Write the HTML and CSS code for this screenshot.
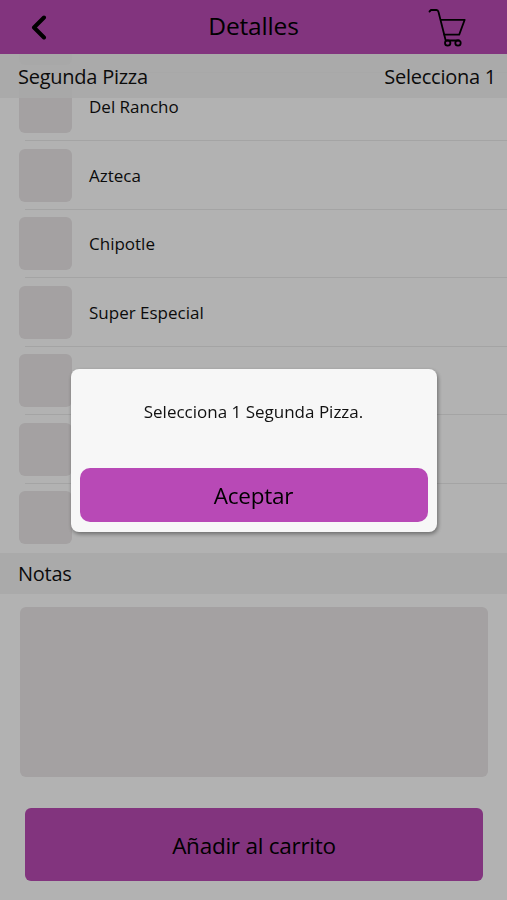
FILE: index.html
```html
<!DOCTYPE html>
<html lang="es">
<head>
  <meta charset="UTF-8" />
  <meta name="viewport" content="width=device-width, initial-scale=1" />
  <title>Detalles</title>
  <link rel="stylesheet" href="styles.css">
</head>
<body>
  <div class="screen">
    <header class="topbar">
      <button class="icon-btn back" aria-label="Volver">
        <svg width="18" height="26" viewBox="0 0 18 26">
          <path d="M14 3.5 L4 13.5 L14 23.5" />
        </svg>
      </button>
      <h1 class="title">Detalles</h1>
      <button class="icon-btn cart" aria-label="Carrito">
        <svg width="40" height="40" viewBox="0 0 40 40">
          <path d="M2.5 4.5 L4 3 H9.5 Q11 3 11.5 5 L18.7 33.5 H32" />
          <path d="M14 12.8 H37.7 L32.2 27.6 H17.3" />
          <circle cx="20.7" cy="36" r="2.7" />
          <circle cx="31" cy="36" r="2.7" />
        </svg>
      </button>
    </header>

    <main>
      <section class="picker">
        <div class="section-head">
          <span>Segunda Pizza</span>
          <span>Selecciona 1</span>
        </div>
        <ul class="options">
          <li class="option"><span class="check"></span></li>
          <li class="option"><span class="check"></span>Del Rancho</li>
          <li class="option"><span class="check"></span>Azteca</li>
          <li class="option"><span class="check"></span>Chipotle</li>
          <li class="option"><span class="check"></span>Super Especial</li>
          <li class="option"><span class="check"></span></li>
          <li class="option"><span class="check"></span></li>
          <li class="option"><span class="check"></span></li>
        </ul>
      </section>

      <section class="notes">
        <div class="section-head notes-head">Notas</div>
        <textarea class="notes-input" aria-label="Notas"></textarea>
      </section>

      <button class="add-btn">Añadir al carrito</button>
    </main>
  </div>

  <!-- Alert -->
  <div class="overlay">
    <div class="dialog" role="alertdialog">
      <p class="message">Selecciona 1 Segunda Pizza.</p>
      <button class="accept-btn">Aceptar</button>
    </div>
  </div>
</body>
</html>
```
FILE: styles.css
```css
* {
  box-sizing: border-box;
}

body {
  margin: 0;
  font-family: "Open Sans", "Noto Sans", sans-serif;
  background-color: #fff;
  color: #111;
}

button {
  font-family: inherit;
  color: #000;
  border: none;
  padding: 0;
}

.screen {
  height: 900px;
  overflow: hidden;
}

/* Top bar */
.topbar {
  display: grid;
  grid-template-columns: 80px 1fr 80px;
  align-items: center;
  height: 54px;
  background-color: #bb4bb5;
}

.title {
  margin: 0;
  padding-bottom: 2px;
  font-size: 24.5px;
  font-weight: 400;
  letter-spacing: -0.15px;
  line-height: 52px;
  text-align: center;
  color: #000;
}

.icon-btn {
  display: flex;
  background: none;
}

.icon-btn svg {
  fill: none;
  stroke: #000;
  stroke-linecap: round;
  stroke-linejoin: round;
}

.back {
  padding-left: 30px;
}

.back svg {
  stroke-width: 4;
}

.cart svg {
  stroke-width: 1.8;
}

/* Section headings */
.section-head {
  display: flex;
  justify-content: space-between;
  align-items: center;
  height: 43.5px;
  padding: 2px 11px 0 18px;
  font-size: 20px;
  letter-spacing: -0.25px;
  background-color: rgba(242, 242, 242, 0.85);
}

.notes-head {
  height: 41px;
  padding-top: 0;
}

/* Options list */
.picker {
  height: 499px;
  overflow: hidden;
}

.picker .section-head {
  position: relative;
  z-index: 1;
}

.options {
  list-style: none;
  margin: -93.5px 0 0;
  padding: 0;
}

.option {
  display: flex;
  align-items: center;
  gap: 17px;
  height: 68.5px;
  padding-left: 19px;
  font-size: 17px;
  background: linear-gradient(#ebebeb, #ebebeb) 25px 100% / 100% 1px no-repeat;
}

.option:last-child {
  background: none;
}

.check {
  width: 53px;
  height: 53px;
  border-radius: 6px;
  background-color: #ebe7e8;
}

/* Notes */
.notes-input {
  display: block;
  width: 468px;
  height: 170px;
  margin: 13px 0 0 20px;
  border: none;
  border-radius: 6px;
  background-color: #ebe7e8;
  resize: none;
}

.add-btn {
  display: block;
  width: 458px;
  height: 73px;
  margin: 31px 0 0 25px;
  padding-top: 2px;
  border-radius: 6px;
  background-color: #bb4bb5;
  font-size: 22.5px;
  letter-spacing: -0.25px;
}

/* Alert dialog */
.overlay {
  position: fixed;
  inset: 0;
  z-index: 10;
  display: flex;
  justify-content: center;
  align-items: center;
  background-color: rgba(0, 0, 0, 0.3);
}

.dialog {
  display: flex;
  flex-direction: column;
  width: 366px;
  height: 163px;
  padding: 9px 9px 10px;
  border-radius: 8px;
  background-color: #f7f7f7;
  box-shadow: 1px 2px 4px rgba(0, 0, 0, 0.4);
}

.message {
  flex: 1;
  margin: 0;
  padding-top: 22px;
  font-size: 17px;
  text-align: center;
}

.accept-btn {
  height: 54px;
  padding-top: 2px;
  border-radius: 10px;
  background-color: #b849b6;
  font-size: 22.5px;
  letter-spacing: -0.25px;
}
```
